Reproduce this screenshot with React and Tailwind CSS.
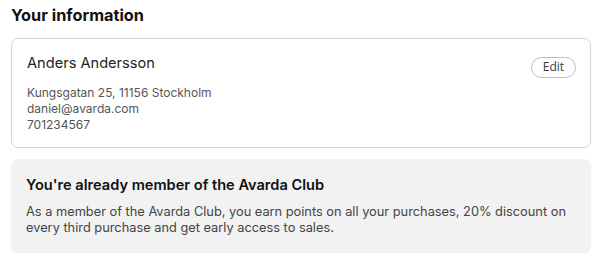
export default function App() {
  return (
    <div className="w-[602px] h-[264px] bg-white px-[11px] pt-[3px] font-['Inter',sans-serif] text-[#111]">
      <h2 className="text-[16.3px] leading-[24px] font-bold text-[#111]">Your information</h2>
      <div className="mt-[11px] rounded-[7px] border border-[#d4d4d4] h-[110px] pl-[15px] pr-[14px] pt-[14px] flex justify-between">
        <div>
          <div className="text-[14.6px] leading-[20px] text-[#222]">Anders Andersson</div>
          <div className="mt-[12px] text-[12px] leading-[16px] text-[#555]">
            <div>Kungsgatan 25, 11156 Stockholm</div>
            <div>daniel@avarda.com</div>
            <div>701234567</div>
          </div>
        </div>
        <div>
          <button className="h-[21px] w-[45px] rounded-full border border-[#bdbdbd] text-[12px] leading-none font-medium text-[#3a3a3a] font-['Open_Sans',sans-serif] bg-white">Edit</button>
        </div>
      </div>
      <div className="mt-[11px] rounded-[7px] bg-[#f2f2f2] h-[94px] pl-[15px] pr-[14px] pt-[17px]">
        <div className="text-[14.6px] leading-[18px] font-semibold text-[#111]">You're already member of the Avarda Club</div>
        <p className="mt-[10px] text-[12.8px] leading-[16px] text-[#444]">As a member of the Avarda Club, you earn points on all your purchases, 20% discount on every third purchase and get early access to sales.</p>
      </div>
    </div>
  );
}
